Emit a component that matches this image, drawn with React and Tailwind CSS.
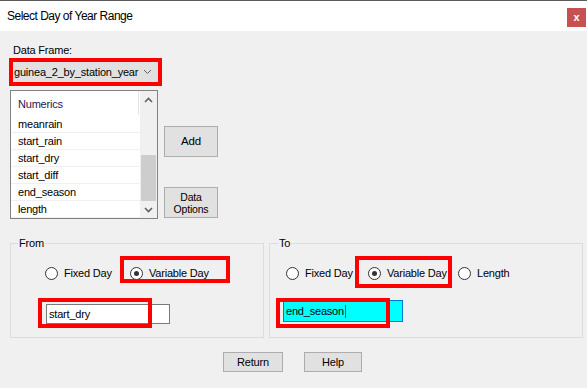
const Radio = ({ label, checked, className = "" }) => (
   <div className={`flex items-center ${className}`}>
      <span className="w-[13px] h-[13px] rounded-full border border-[#333] bg-white flex items-center justify-center shrink-0">
         {checked && <span className="w-[5px] h-[5px] rounded-full bg-[#333]" />}
      </span>
      <span className="ml-[6px]">{label}</span>
   </div>
);

const RedBox = ({ className }) => (
   <div className={`absolute border-4 border-[#ff0000] pointer-events-none ${className}`} />
);

const items = ["meanrain", "start_rain", "start_dry", "start_diff", "end_season", "length"];

const Chevron = ({ up }) => (
   <svg width="9" height="6" viewBox="0 0 9 6" className="block">
      <path
         d={up ? "M1 5 L4.5 1.5 L8 5" : "M1 1 L4.5 4.5 L8 1"}
         fill="none"
         stroke="#606060"
         strokeWidth="1.6"
      />
   </svg>
);

const App = () => {
   return (
      <div
         className="w-[587px] h-[388px] bg-[#f0f0f0] text-[11px] tracking-[-0.2px] text-black overflow-hidden"
         style={{ fontFamily: '"Liberation Sans", Arial, sans-serif' }}
      >
         <div className="h-px bg-[#5a5a5a]" />
         <div className="h-[30px] bg-white flex items-center justify-between pl-[7px] pr-px">
            <span className="text-[12px] tracking-[-0.5px]">Select Day of Year Range</span>
            <div className="w-[19px] h-[19px] bg-[#c75050] text-white text-[11px] font-bold flex items-center justify-center mt-[2px]">
               x
            </div>
         </div>

         <div className="pl-[10px]">
            <div className="pl-[3px] pt-[12px] h-[27px] leading-[14px]">Data Frame:</div>
            <div className="-ml-px w-[153px] h-[28px] border-4 border-[#ff0000] bg-[#e1e1e1] flex items-center justify-between pl-px pr-[6px]">
               <span>guinea_2_by_station_year</span>
               <svg width="9" height="6" viewBox="0 0 9 6">
                  <path d="M1 1 L4.5 4.5 L8 1" fill="none" stroke="#606060" strokeWidth="1" />
               </svg>
            </div>

            <div className="flex mt-[4px]">
               <div className="w-[148px] h-[129px] border border-[#828282] bg-white flex">
                  <div className="flex-1 flex flex-col">
                     <div className="h-[25px] flex items-center pl-[7px] pt-px relative">
                        <span className="text-[#1a1a50]">Numerics</span>
                        <div className="absolute right-[1px] top-0 w-px h-[24px] bg-[#e5e5e5]" />
                     </div>
                     {items.map((it) => (
                        <div key={it} className="h-[17px] flex items-center pl-[7px] pt-px border-b border-[#f0f0f0]">
                           {it}
                        </div>
                     ))}
                  </div>
                  <div className="w-[17px] bg-[#f0f0f0] flex flex-col">
                     <div className="h-[17px] flex items-center justify-center">
                        <Chevron up />
                     </div>
                     <div className="flex-1 px-px">
                        <div className="mt-[47px] h-[46px] bg-[#cdcdcd]" />
                     </div>
                     <div className="h-[17px] flex items-center justify-center">
                        <Chevron />
                     </div>
                  </div>
               </div>

               <div className="ml-[6px] flex flex-col">
                  <div className="mt-[36px] w-[54px] h-[31px] border border-[#adadad] bg-[#e1e1e1] flex items-center justify-center text-[11.5px]">
                     Add
                  </div>
                  <div className="mt-[30px] w-[54px] h-[31px] border border-[#adadad] bg-[#e1e1e1] flex flex-col items-center justify-center leading-[12px] text-[10.5px]">
                     <span>Data</span>
                     <span>Options</span>
                  </div>
               </div>
            </div>

            <div className="flex mt-[24px]">
               <div className="relative w-[254px] h-[95px] border border-[#dcdcdc]">
                  <span className="absolute -top-[8px] left-[7px] bg-[#f0f0f0] px-px leading-[14px]">From</span>
                  <div className="flex h-[16px] items-center mt-[21px] pl-[34px]">
                     <Radio label="Fixed Day" className="w-[85px]" />
                     <Radio label="Variable Day" checked />
                  </div>
                  <div className="ml-[35px] mt-[23px] w-[124px] h-[20px] border border-[#7a7a7a] bg-white flex items-center pl-[2px]">
                     start_dry
                  </div>
                  <RedBox className="left-[109px] top-[12px] w-[110px] h-[27px]" />
                  <RedBox className="left-[27px] top-[54px] w-[114px] h-[30px]" />
               </div>

               <div className="relative ml-[5px] w-[314px] h-[95px] border border-[#dcdcdc]">
                  <span className="absolute -top-[8px] left-[8px] bg-[#f0f0f0] px-px leading-[14px]">To</span>
                  <div className="flex h-[16px] items-center mt-[21px] pl-[16px]">
                     <Radio label="Fixed Day" className="w-[82px]" />
                     <Radio label="Variable Day" checked className="w-[90px]" />
                     <Radio label="Length" />
                  </div>
                  <div className="ml-[13px] mt-[19px] w-[120px] h-[22px] border border-[#0078d7] bg-[#00ffff] flex items-center pl-[2px]">
                     <span>end_season</span>
                     <span className="w-px h-[13px] bg-[#ff0000] ml-px" />
                  </div>
                  <RedBox className="left-[85px] top-[12px] w-[97px] h-[32px]" />
                  <RedBox className="left-[6px] top-[54px] w-[114px] h-[30px]" />
               </div>
            </div>

            <div className="flex mt-[14px] pl-[213px]">
               <div className="w-[60px] h-[20px] border border-[#adadad] bg-[#e1e1e1] flex items-center justify-center">
                  Return
               </div>
               <div className="ml-[21px] w-[58px] h-[20px] border border-[#adadad] bg-[#e1e1e1] flex items-center justify-center">
                  Help
               </div>
            </div>
         </div>
      </div>
   );
};

export default App;
